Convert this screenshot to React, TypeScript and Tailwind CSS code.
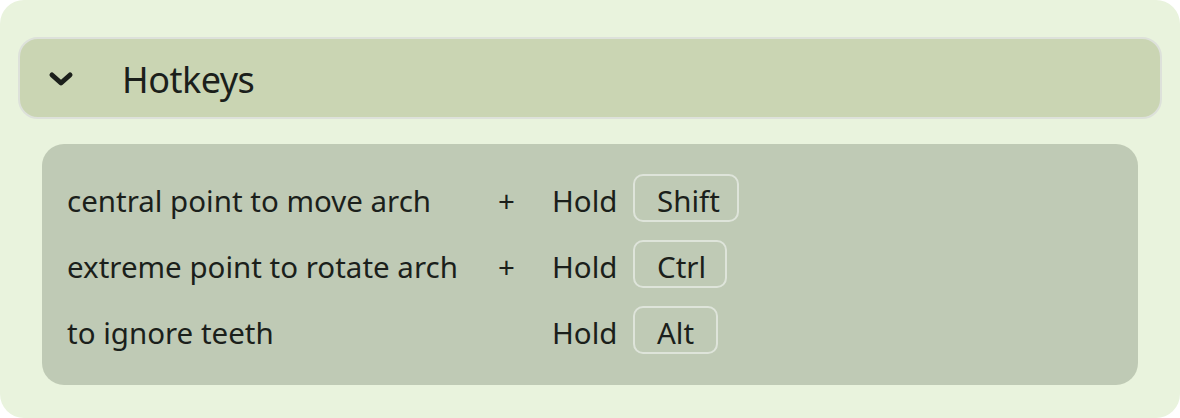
import { useState } from 'react';

const hotkeys = [
  { action: 'central point to move arch', plus: true, key: 'Shift', width: 'w-[106px]' },
  { action: 'extreme point to rotate arch', plus: true, key: 'Ctrl', width: 'w-[94px]' },
  { action: 'to ignore teeth', plus: false, key: 'Alt', width: 'w-[85px]' },
];

export default function App() {
  const [open, setOpen] = useState(true);

  return (
    <div
      className="w-[1180px] h-[418px] bg-white"
      style={{ fontFamily: '"Noto Sans", "Open Sans", sans-serif' }}
    >
      <div className="h-full rounded-[24px] bg-[#e9f3dd] px-[18px] pt-[37px]">
        <button
          onClick={() => setOpen(o => !o)}
          className="flex h-[82px] w-full items-center rounded-[20px] border-2 border-[#dde1da] bg-[#cad5b3] text-left"
        >
          <svg width="26" height="16" viewBox="0 0 26 16" className="ml-[28px] mt-[2px] shrink-0">
            <path d="M4 4 L13 12 L22 4" fill="none" stroke="#1b1f1b" strokeWidth="5" strokeLinecap="round" strokeLinejoin="round" />
          </svg>
          <span className="ml-[48px] pt-[4px] text-[36px] leading-none tracking-[-0.5px] text-[#1b1f1b]">Hotkeys</span>
        </button>

        {open && (
          <div className="mx-[24px] mt-[25px] flex flex-col gap-[18px] rounded-[22px] bg-[#bfcab5] pl-[25px] pt-[30px] pb-[31px]">
            {hotkeys.map(h => (
              <div key={h.key} className="flex h-[48px] items-center text-[29.5px] leading-none text-[#1b1f1b]">
                <span className="w-[431px] shrink-0 pt-[5px]">{h.action}</span>
                <span className="w-[54px] shrink-0 pt-[5px]">{h.plus ? '+' : ''}</span>
                <span className="w-[81px] shrink-0 pt-[5px]">Hold</span>
                <span className={`${h.width} flex h-[48px] shrink-0 items-center rounded-[10px] border-2 border-[#dee4da] pl-[22px] pt-[5px]`}>
                  {h.key}
                </span>
              </div>
            ))}
          </div>
        )}
      </div>
    </div>
  );
}
